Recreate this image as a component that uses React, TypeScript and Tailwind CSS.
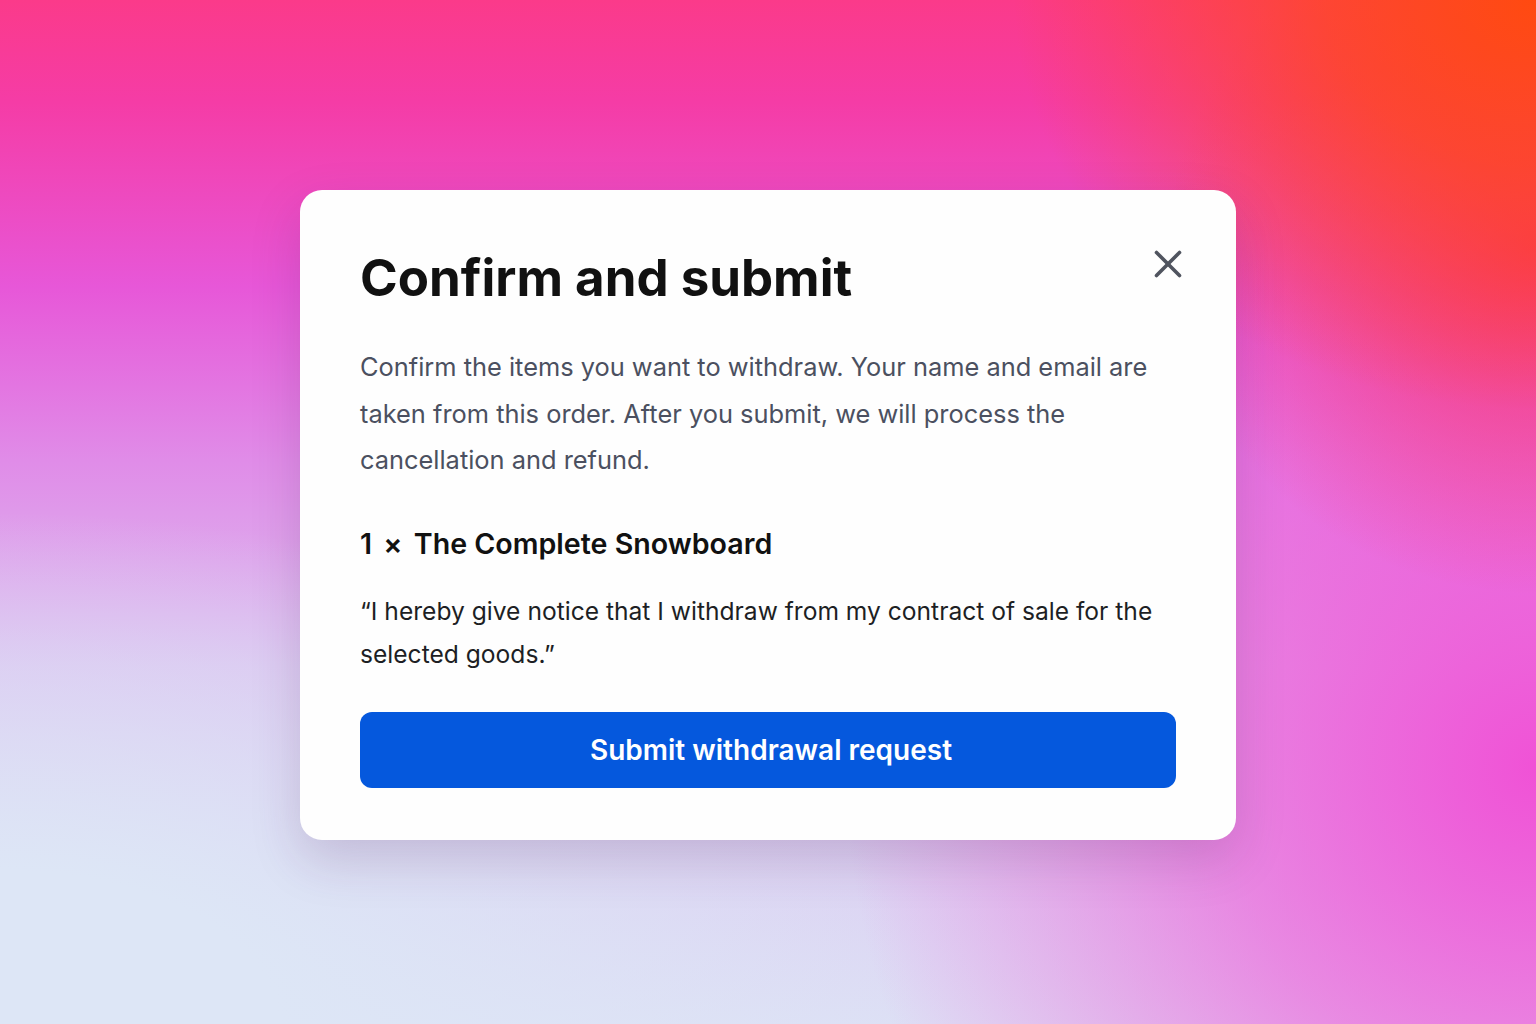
import React from "react";

export default function App() {
  return (
    <div
      className="relative w-full h-[1024px] overflow-hidden flex items-center justify-center pt-[6px] font-['Inter','Liberation_Sans',sans-serif] bg-[radial-gradient(ellipse_34%_40%_at_100%_0%,#ff4a10_0%,rgba(255,74,16,0.7)_40%,rgba(255,74,16,0)_100%),radial-gradient(ellipse_24%_34%_at_100%_24%,rgba(250,50,95,0.9)_0%,rgba(250,50,95,0)_100%),radial-gradient(ellipse_45%_70%_at_100%_75%,#f052d6_0%,rgba(240,82,214,0.6)_45%,rgba(240,82,214,0)_100%),radial-gradient(ellipse_60%_50%_at_0%_100%,#dde6f6_0%,#dde6f6_30%,rgba(221,230,246,0)_100%),linear-gradient(to_bottom,#fb3a8a_0%,#f53ca6_10%,#e757d8_28%,#e08ce8_45%,#dcc0f0_65%,#dde0f5_100%)]"
    >
      <div className="relative w-[936px] bg-[#fefefe] rounded-[22px] shadow-[0_20px_50px_rgba(80,30,90,0.18)] px-[60px] pt-[58px] pb-[52px]">
        <button
          aria-label="Close"
          className="absolute top-[56px] right-[50px] w-[36px] h-[36px] flex items-center justify-center text-[#50545f]"
        >
          <svg width="28" height="28" viewBox="0 0 28 28" fill="none" stroke="currentColor" strokeWidth="3.6" strokeLinecap="round">
            <path d="M2.5 2.5 L25.5 25.5" />
            <path d="M25.5 2.5 L2.5 25.5" />
          </svg>
        </button>

        <h1 className="text-[51px] leading-[60px] font-bold text-[#111111]">
          Confirm and submit
        </h1>

        <p className="mt-[36px] text-[25.4px] leading-[46.5px] text-[#4b5060]">
          Confirm the items you want to withdraw. Your name and email are taken from this order. After you submit, we will process the cancellation and refund.
        </p>

        <h2 className="mt-[42px] text-[28.6px] leading-[36px] font-semibold text-[#111111]">
          1<span className="mx-[4px]"> × </span>The Complete Snowboard
        </h2>

        <p className="mt-[28px] text-[24.6px] leading-[43px] text-[#1d1f24]">
          “I hereby give notice that I withdraw from my contract of sale for the selected goods.”
        </p>

        <button className="mt-[36px] w-full h-[76px] rounded-[12px] bg-[#0558dd] text-white text-[28px] font-semibold flex items-center justify-center pl-[6px]">
          Submit withdrawal request
        </button>
      </div>
    </div>
  );
}
